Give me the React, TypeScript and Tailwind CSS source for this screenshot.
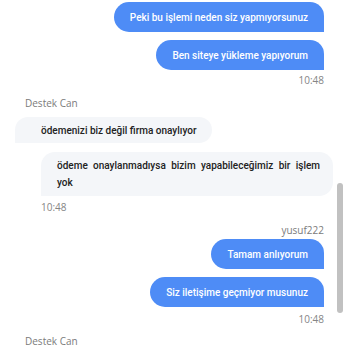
import React from 'react'

type Msg = { text: string }

const Outgoing = ({ text }: Msg) => (
  <div className="self-end h-[30px] flex items-center px-4 bg-[#4e8cf6] text-white text-[10px] font-medium rounded-l-[15px] rounded-tr-[14px] rounded-br-none font-['Roboto',sans-serif]">
    {text}
  </div>
)

const Name = ({ children, right }: { children: React.ReactNode; right?: boolean }) => (
  <div
    className={`text-[10px] leading-[14px] text-[#7b7b7b] font-['Open_Sans',sans-serif] ${right ? 'self-end' : 'pl-[10px]'}`}
  >
    {children}
  </div>
)

const Time = ({ left }: { left?: boolean }) => (
  <div
    className={`text-[10px] leading-[14px] text-[#858585] font-['Open_Sans',sans-serif] ${left ? 'pl-[26px]' : 'self-end'}`}
  >
    10:48
  </div>
)

export default function App() {
  return (
    <div className="relative w-[350px] h-[350px] overflow-hidden bg-white">
      <div className="flex flex-col pl-[15px] pr-[26px] pt-[2px]">
        <Outgoing text="Peki bu işlemi neden siz yapmıyorsunuz" />
        <div className="mt-[8px]" />
        <Outgoing text="Ben siteye yükleme yapıyorum" />
        <div className="mt-[3px]" />
        <Time />
        <div className="mt-[9px]" />
        <Name>Destek Can</Name>
        <div className="mt-[7px]" />
        <div className="self-start h-[26px] flex items-center pl-[26px] pr-4 bg-[#f4f6f9] text-[#222] text-[10px] font-medium rounded-r-[14px] rounded-tl-[14px] font-['Roboto',sans-serif]">
          ödemenizi biz değil firma onaylıyor
        </div>
        <div className="mt-[9px]" />
        <div className="ml-[26px] mr-[-9px] pl-4 pr-[13px] py-[5px] bg-[#f4f6f9] text-[#222] text-[10px] leading-[17px] font-medium text-justify rounded-r-[14px] rounded-tl-[14px] font-['Roboto',sans-serif]">
          ödeme onaylanmadıysa bizim yapabileceğimiz bir işlem yok
        </div>
        <div className="mt-[4px]" />
        <Time left />
        <div className="mt-[9px]" />
        <Name right>yusuf222</Name>
        <div className="mt-[2px]" />
        <Outgoing text="Tamam anlıyorum" />
        <div className="mt-[8px]" />
        <Outgoing text="Siz iletişime geçmiyor musunuz" />
        <div className="mt-[5px]" />
        <Time />
        <div className="mt-[8px]" />
        <Name>Destek Can</Name>
      </div>
      <div className="absolute left-[337px] top-[183px] w-[6px] h-[130px] rounded-full bg-[#c1c1c1]" />
    </div>
  )
}
